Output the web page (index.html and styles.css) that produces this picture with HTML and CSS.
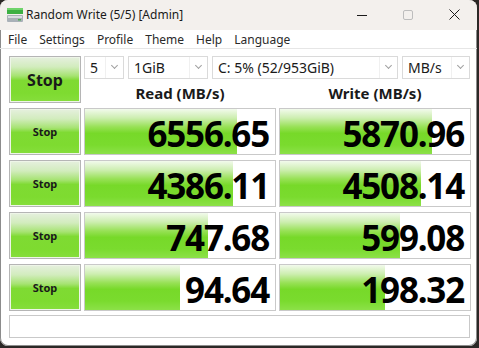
FILE: index.html
```html
<!DOCTYPE html>
<html lang="en">
<head>
  <meta charset="UTF-8" />
  <title>Random Write (5/5) [Admin]</title>
  <link rel="stylesheet" href="styles.css">
</head>
<body>
  <div class="window">
    <div class="titlebar">
      <svg class="app-icon" width="16" height="16" viewBox="0 0 16 16">
        <rect x="0" y="1" width="16" height="6" fill="#3cb043"/>
        <rect x="0" y="1" width="16" height="2" fill="#6fd36b"/>
        <rect x="0" y="8" width="16" height="7" rx="1" fill="#a9b1b8"/>
        <rect x="1" y="9" width="14" height="2" fill="#d8dde1"/>
        <rect x="11" y="12" width="3" height="1.5" fill="#4caf50"/>
      </svg>
      <span class="title">Random Write (5/5) [Admin]</span>
      <div class="controls">
        <span class="ctl"><svg width="10" height="10" viewBox="0 0 10 10"><path d="M0 5.5h10" stroke="#1a1a1a" stroke-width="1"/></svg></span>
        <span class="ctl"><svg width="10" height="10" viewBox="0 0 10 10"><rect x="0.5" y="0.5" width="9" height="9" rx="1.5" fill="none" stroke="#bdbdbd"/></svg></span>
        <span class="ctl"><svg width="11" height="11" viewBox="0 0 11 11"><path d="M0.5 0.5l10 10M10.5 0.5l-10 10" stroke="#1a1a1a" stroke-width="1"/></svg></span>
      </div>
    </div>

    <div class="menubar">
      <span>File</span>
      <span>Settings</span>
      <span>Profile</span>
      <span>Theme</span>
      <span>Help</span>
      <span>Language</span>
    </div>

    <div class="main">
      <div class="board">
        <button class="stop big">Stop</button>
        <div class="top">
          <div class="combos">
            <div class="combo w-count"><span>5</span><i class="arrow"></i></div>
            <div class="combo w-size"><span>1GiB</span><i class="arrow"></i></div>
            <div class="combo w-drive"><span>C: 5% (52/953GiB)</span><i class="arrow"></i></div>
            <div class="combo w-unit"><span>MB/s</span><i class="arrow"></i></div>
          </div>
          <div class="heads">
            <div>Read (MB/s)</div>
            <div>Write (MB/s)</div>
          </div>
        </div>

        <button class="stop">Stop</button>
        <div class="cell" style="--w:152px">6556.65</div>
        <div class="cell" style="--w:152px">5870.96</div>

        <button class="stop">Stop</button>
        <div class="cell" style="--w:148px">4386.11</div>
        <div class="cell" style="--w:141px">4508.14</div>

        <button class="stop">Stop</button>
        <div class="cell" style="--w:123px">747.68</div>
        <div class="cell" style="--w:120px">599.08</div>

        <button class="stop">Stop</button>
        <div class="cell" style="--w:95px">94.64</div>
        <div class="cell" style="--w:105px">198.32</div>
      </div>
      <div class="comment"></div>
    </div>
  </div>
</body>
</html>
```

FILE: styles.css
```css
html, body {
  margin: 0;
  padding: 0;
  height: 100%;
  background: #2b2826;
  font-family: 'Noto Sans', 'Open Sans', sans-serif;
  color: #1a1a1a;
}

.window {
  width: 477px;
  height: 346px;
  background: #ffffff;
  border-radius: 8px;
  overflow: hidden;
  box-shadow: inset 0 0 0 1px #8c8c8c;
  display: flex;
  flex-direction: column;
}

.titlebar {
  height: 30px;
  flex: none;
  display: flex;
  align-items: center;
  background: #f3f0ed;
  padding-left: 7px;
  padding-bottom: 1px;
  box-sizing: border-box;
}

.app-icon {
  flex: none;
  margin-right: 3px;
}

.title {
  font-size: 12px;
  flex: 1;
}

.controls {
  display: flex;
  height: 100%;
}

.ctl {
  width: 46px;
  display: flex;
  align-items: center;
  justify-content: center;
}

.menubar {
  height: 18px;
  flex: none;
  display: flex;
  align-items: center;
  gap: 12px;
  padding-left: 8px;
  font-size: 12px;
  border-bottom: 1px solid #e6e6e6;
  color: #2a2a2a;
}

.main {
  flex: 1;
  padding: 7px 0 0 9px;
}

.board {
  display: grid;
  grid-template-columns: 72px 192px 192px;
  grid-auto-rows: 47px;
  column-gap: 3px;
  row-gap: 5px;
}

.stop {
  margin: 0;
  padding: 0;
  font-family: inherit;
  font-weight: 700;
  font-size: 11px;
  color: #1a1a1a;
  border: 1px solid #b5b5b5;
  box-shadow: inset 0 0 0 1px #eef5e8;
  background: linear-gradient(#e6f0df 0%, #d2ecbd 22%, #a6e372 42%, #7fda33 52%, #7edb30 80%, #86de3c 100%);
}

.stop.big {
  font-size: 16px;
}

.top {
  grid-column: 2 / span 2;
  display: flex;
  flex-direction: column;
}

.combos {
  height: 23px;
  display: flex;
  gap: 4px;
}

.combo {
  display: flex;
  align-items: center;
  border: 1px solid #dadada;
  font-size: 14px;
  box-sizing: border-box;
}

.combo span {
  flex: 1;
  padding-left: 5px;
  white-space: nowrap;
}

.arrow {
  align-self: stretch;
  width: 17px;
  border-left: 1px solid #f0f0f0;
  display: flex;
  align-items: center;
  justify-content: center;
}

.arrow::after {
  content: "";
  width: 4px;
  height: 4px;
  border-right: 1px solid #a0a0a0;
  border-bottom: 1px solid #a0a0a0;
  transform: translateY(-2px) rotate(45deg);
}

.w-count { width: 40px; }
.w-size { width: 80px; }
.w-drive { width: 186px; }
.w-unit { width: 68px; }

.heads {
  flex: 1;
  display: grid;
  grid-template-columns: 192px 192px;
  column-gap: 3px;
  align-items: end;
  text-align: center;
  font-weight: 700;
  font-size: 15px;
  line-height: 20px;
}

.cell {
  border: 1px solid #c9c9c9;
  display: flex;
  align-items: center;
  justify-content: flex-end;
  padding: 3px 6px 0 0;
  font-weight: 700;
  font-size: 35px;
  letter-spacing: -1.2px;
  color: #000;
  background:
    linear-gradient(#f2faec 0%, #cdeeb0 20%, #97e155 40%, #77d929 54%, #7adb2e 80%, #8ce148 100%) no-repeat,
    #ffffff;
  background-size: var(--w) 100%, auto;
}

.comment {
  margin-top: 4px;
  width: 461px;
  height: 23px;
  box-sizing: border-box;
  border: 1px solid #c9c9c9;
}
```
